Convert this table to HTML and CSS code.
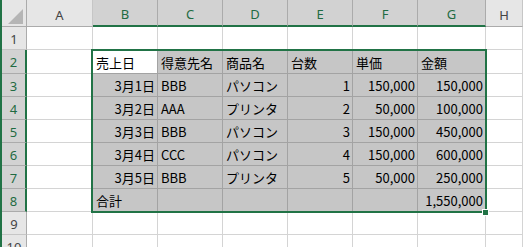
FILE: index.html
```html
<!DOCTYPE html>
<html lang="ja">
<head>
  <meta charset="UTF-8" />
  <meta name="viewport" content="width=device-width, initial-scale=1.0" />
  <title>売上表</title>
  <link rel="stylesheet" href="styles.css">
</head>
<body>

  <div class="window">
    <div class="sheet">

      <!-- 列見出し -->
      <div class="corner">
        <svg width="15" height="15" viewBox="0 0 15 15"><polygon points="15,0 15,15 0,15" fill="#b5b5b5"/></svg>
      </div>
      <div class="col-head">A</div>
      <div class="col-head on">B</div>
      <div class="col-head on">C</div>
      <div class="col-head on">D</div>
      <div class="col-head on">E</div>
      <div class="col-head on">F</div>
      <div class="col-head on">G</div>
      <div class="col-head">H</div>

      <!-- 1行目 -->
      <div class="row-head">1</div>
      <div class="cell"></div><div class="cell"></div><div class="cell"></div><div class="cell"></div>
      <div class="cell"></div><div class="cell"></div><div class="cell"></div><div class="cell"></div>

      <!-- 2行目 見出し -->
      <div class="row-head on">2</div>
      <div class="cell"></div>
      <div class="cell active">売上日</div>
      <div class="cell fill">得意先名</div>
      <div class="cell fill">商品名</div>
      <div class="cell fill">台数</div>
      <div class="cell fill">単価</div>
      <div class="cell fill">金額</div>
      <div class="cell"></div>

      <div class="row-head on">3</div>
      <div class="cell"></div>
      <div class="cell fill num">3月1日</div>
      <div class="cell fill">BBB</div>
      <div class="cell fill">パソコン</div>
      <div class="cell fill num">1</div>
      <div class="cell fill num">150,000</div>
      <div class="cell fill num">150,000</div>
      <div class="cell"></div>

      <div class="row-head on">4</div>
      <div class="cell"></div>
      <div class="cell fill num">3月2日</div>
      <div class="cell fill">AAA</div>
      <div class="cell fill">プリンタ</div>
      <div class="cell fill num">2</div>
      <div class="cell fill num">50,000</div>
      <div class="cell fill num">100,000</div>
      <div class="cell"></div>

      <div class="row-head on">5</div>
      <div class="cell"></div>
      <div class="cell fill num">3月3日</div>
      <div class="cell fill">BBB</div>
      <div class="cell fill">パソコン</div>
      <div class="cell fill num">3</div>
      <div class="cell fill num">150,000</div>
      <div class="cell fill num">450,000</div>
      <div class="cell"></div>

      <div class="row-head on">6</div>
      <div class="cell"></div>
      <div class="cell fill num">3月4日</div>
      <div class="cell fill">CCC</div>
      <div class="cell fill">パソコン</div>
      <div class="cell fill num">4</div>
      <div class="cell fill num">150,000</div>
      <div class="cell fill num">600,000</div>
      <div class="cell"></div>

      <div class="row-head on">7</div>
      <div class="cell"></div>
      <div class="cell fill num">3月5日</div>
      <div class="cell fill">BBB</div>
      <div class="cell fill">プリンタ</div>
      <div class="cell fill num">5</div>
      <div class="cell fill num">50,000</div>
      <div class="cell fill num">250,000</div>
      <div class="cell"></div>

      <!-- 合計行 -->
      <div class="row-head on">8</div>
      <div class="cell"></div>
      <div class="cell fill">合計</div>
      <div class="cell fill"></div>
      <div class="cell fill"></div>
      <div class="cell fill"></div>
      <div class="cell fill"></div>
      <div class="cell fill num">1,550,000</div>
      <div class="cell"></div>

      <div class="row-head">9</div>
      <div class="cell"></div><div class="cell"></div><div class="cell"></div><div class="cell"></div>
      <div class="cell"></div><div class="cell"></div><div class="cell"></div><div class="cell"></div>

      <div class="row-head">10</div>
      <div class="cell"></div><div class="cell"></div><div class="cell"></div><div class="cell"></div>
      <div class="cell"></div><div class="cell"></div><div class="cell"></div><div class="cell"></div>

      <!-- 選択範囲 B2:G8 -->
      <div class="selection">
        <span class="handle"></span>
      </div>
    </div>
  </div>

</body>
</html>
```

FILE: styles.css
```css
body {
  margin: 0;
  padding: 0;
  background-color: #ffffff;
  font-family: 'Noto Sans CJK JP', 'Noto Sans', sans-serif;
  overflow: hidden;
}

.window {
  border-left: 2px solid #217346;
  height: 247px;
  overflow: hidden;
}

.sheet {
  position: relative;
  display: grid;
  grid-template-columns: 25px 66px 65px 65px 65px 65px 65px 68px 1fr;
  grid-template-rows: 27px 23px 24px repeat(8, 23px);
}

/* 見出し */
.corner,
.col-head,
.row-head {
  box-sizing: border-box;
  background-color: #e6e6e6;
  border-right: 1px solid #ababab;
  border-bottom: 1px solid #ababab;
  color: #444;
  font-family: 'Noto Sans', sans-serif;
  font-size: 13px;
  display: flex;
  justify-content: center;
  align-items: center;
}

.corner {
  align-items: flex-end;
  justify-content: flex-end;
  padding: 0 3px 2px 0;
}

.corner svg {
  display: block;
}

.col-head {
  padding-top: 3px;
  border-right-color: #c6c6c6;
}

.row-head {
  border-bottom-color: #c6c6c6;
  padding-top: 1px;
}

.col-head.on {
  background-color: #d2d2d2;
  color: #1f6b42;
  border-bottom: 2px solid #217346;
  border-right-color: #ababab;
}

.row-head.on {
  background-color: #d2d2d2;
  color: #1f6b42;
  border-right: 2px solid #217346;
  border-bottom-color: #ababab;
}

/* セル */
.cell {
  box-sizing: border-box;
  border-right: 1px solid #d4d4d4;
  border-bottom: 1px solid #d4d4d4;
  font-size: 13px;
  line-height: 17px;
  color: #000;
  padding: 0 3px 2px;
  display: flex;
  align-items: flex-end;
  white-space: nowrap;
  overflow: hidden;
}

.cell.fill {
  background-color: #c6c6c6;
  border-color: #a3a3a3;
}

.cell.active {
  background-color: #ffffff;
  border-color: #a3a3a3;
}

.cell.num {
  justify-content: flex-end;
  padding-right: 2px;
}

.selection {
  position: absolute;
  left: 89px;
  top: 49px;
  width: 396px;
  height: 164px;
  box-sizing: border-box;
  border: 2px solid #217346;
  pointer-events: none;
}

.handle {
  position: absolute;
  right: -4px;
  bottom: -5px;
  width: 5px;
  height: 5px;
  background-color: #217346;
  border: 1px solid #ffffff;
}
```
